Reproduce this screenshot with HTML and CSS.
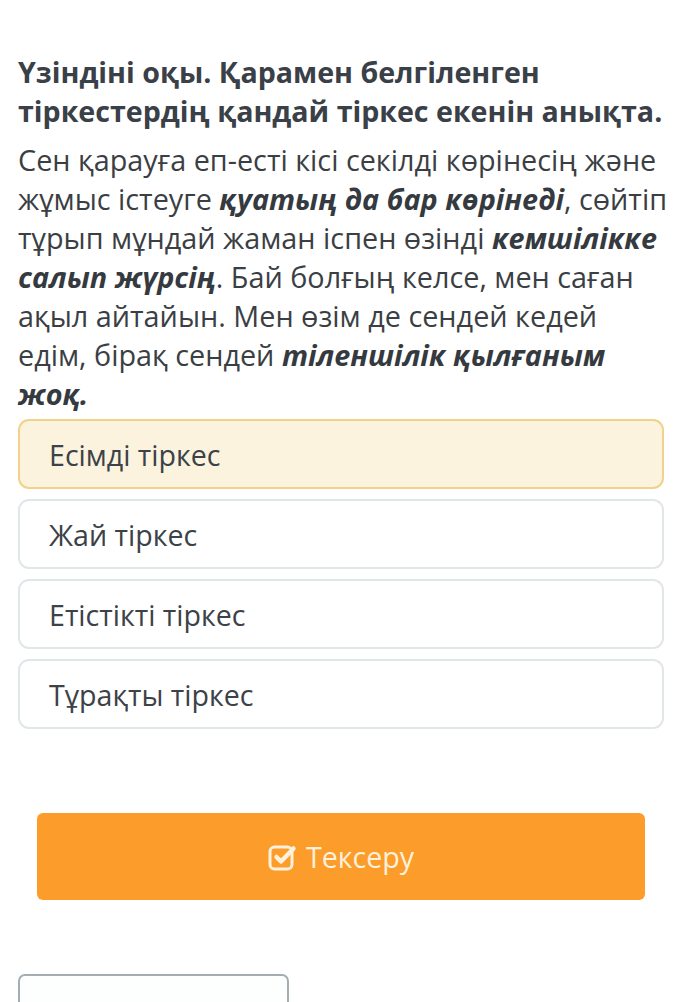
FILE: index.html
```html
<!DOCTYPE html>
<html lang="kk">
<head>
<meta charset="utf-8">
<link rel="stylesheet" href="styles.css">
</head>
<body>
<main class="page">
  <h1 class="title">Үзіндіні оқы. Қарамен белгіленген тіркестердің қандай тіркес екенін анықта.</h1>
  <p class="text">Сен қарауға еп-есті кісі секілді көрінесің және жұмыс істеуге <b><i>қуатың да бар көрінеді</i></b>, сөйтіп тұрып мұндай жаман іспен өзінді <b><i>кемшілікке салып жүрсің</i></b>. Бай болғың келсе, мен саған ақыл айтайын. Мен өзім де сендей кедей едім, бірақ сендей <b><i>тіленшілік қылғаным жоқ.</i></b></p>
  <div class="options">
    <div class="option selected">Есімді тіркес</div>
    <div class="option">Жай тіркес</div>
    <div class="option">Етістікті тіркес</div>
    <div class="option">Тұрақты тіркес</div>
  </div>
  <div class="actions">
    <button class="check">
      <svg class="icon" width="30" height="28" viewBox="0 0 30 28" fill="none">
        <rect x="2" y="4" width="22" height="22" rx="4.5" stroke="#fdf1dc" stroke-width="3"/>
        <path d="M8.5 14 L13 18.5 L25.5 5.5" stroke="#fdf1dc" stroke-width="4.5" stroke-linecap="round" stroke-linejoin="round"/>
      </svg>
      <span>Тексеру</span>
    </button>
  </div>
  <div class="bottom-box"></div>
</main>
</body>
</html>
```
FILE: styles.css
```css
html, body {
  margin: 0;
  padding: 0;
  background: #ffffff;
}
body {
  font-family: "Open Sans", "Noto Sans", sans-serif;
  color: #3d4349;
}
.page {
  padding: 52px 16px 0 18px;
  height: 1002px;
  box-sizing: border-box;
  overflow: hidden;
}
.title {
  margin: 0;
  font-size: 28.6px;
  font-weight: 700;
  line-height: 39px;
  color: #3a4047;
}
.text {
  margin: 10px 0 0 0;
  font-size: 28.8px;
  line-height: 39px;
  color: #3b3f44;
}
.text b {
  font-weight: 700;
  color: #353a40;
}
.options {
  display: flex;
  flex-direction: column;
  gap: 10px;
  margin: 6px 5px 0 0;
}
.option {
  height: 70px;
  box-sizing: border-box;
  border: 2px solid #e1e6e9;
  border-radius: 11px;
  background: #ffffff;
  display: flex;
  align-items: center;
  padding-left: 29px;
  font-size: 28.6px;
  color: #3c4248;
}
.option.selected {
  background: #fbf3de;
  border-color: #f0d289;
}
.actions {
  padding: 84px 24px 0 19px;
}
.check {
  width: 100%;
  height: 87px;
  border: none;
  border-radius: 6px;
  background: #fc9c2a;
  color: #fdf1dc;
  font-family: inherit;
  font-size: 28.6px;
  display: flex;
  align-items: center;
  justify-content: center;
  gap: 8px;
  padding: 0;
}
.icon {
  display: block;
}
.bottom-box {
  margin-top: 74px;
  width: 271px;
  height: 60px;
  box-sizing: border-box;
  border: 2px solid #a3adb2;
  border-radius: 7px;
  background: #fdfefe;
}
```
